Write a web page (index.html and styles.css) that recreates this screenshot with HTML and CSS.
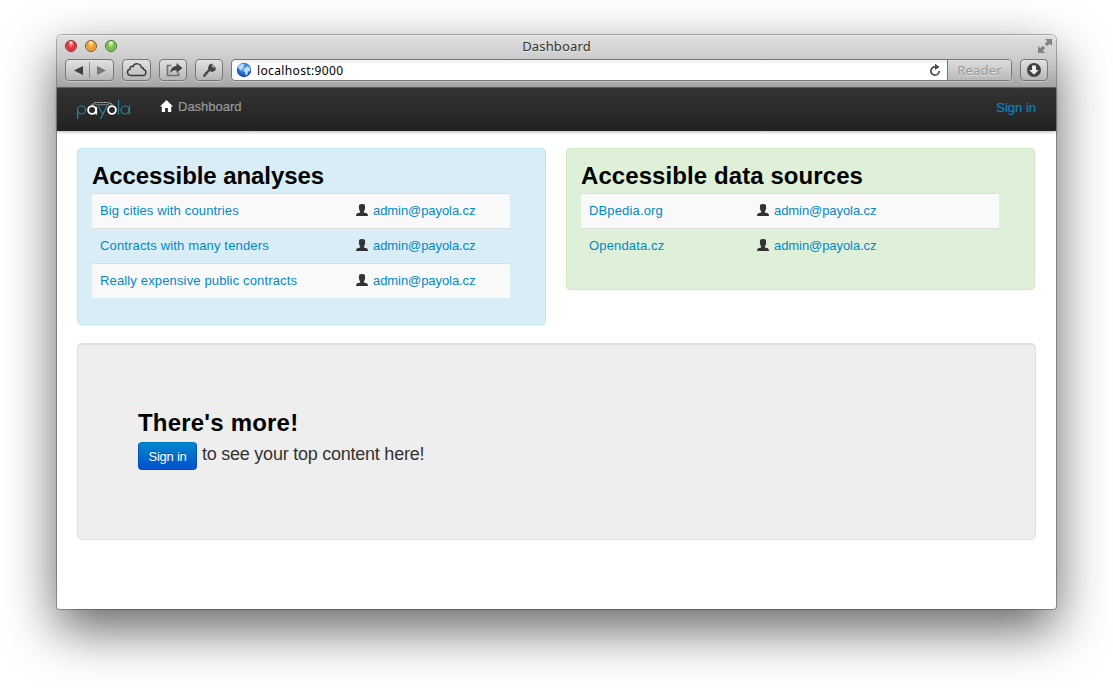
FILE: index.html
```html
<!DOCTYPE html>
<html lang="en">
<head>
<meta charset="utf-8">
<title>Dashboard</title>
<link rel="stylesheet" href="styles.css">
</head>
<body>
<svg class="defs" width="0" height="0" aria-hidden="true">
  <symbol id="user" viewBox="0 0 12 12"><path d="M3 1.200Q3.400 0 6 0Q8.600 0 9 1.200V3.500Q9.500 4 8.900 4.900Q8.700 6.500 7.900 7.200V8.400L10.800 9.300Q12 9.800 12 12H0Q0 9.800 1.200 9.300L4.100 8.400V7.200Q3.300 6.500 3.100 4.900Q2.500 4 3 3.500Z"/></symbol>
</svg>
<div class="window">
  <header class="chrome">
    <div class="titlebar">
      <div class="lights"><i class="light red"></i><i class="light amber"></i><i class="light green"></i></div>
      <span class="window-title">Dashboard</span>
      <svg class="expand" width="14" height="14" viewBox="0 0 14 14"><path d="M7 0h7v7l-2.300-2.300-2.600 2.600-2.400-2.400 2.600-2.600z M0 7l2.300 2.300 2.600-2.600 2.400 2.400-2.600 2.600L7 14H0z" fill="#828282"/></svg>
    </div>
    <div class="toolbar">
      <div class="tool history">
        <svg width="47" height="20" viewBox="0 0 47 20"><path d="M8 10.500L17 6v9z" fill="#3e3e3e"/><path d="M40 10.500L31 6v9z" fill="#777"/><path d="M23.500 2v16" stroke="#8b8b8b"/></svg>
      </div>
      <div class="tool cloud">
        <svg width="27" height="20" viewBox="0 0 27 20"><path d="M8 15.500C3.500 15.500 3.500 9.700 7 9.300C6.500 6.500 8.800 5.800 10 6.700C11.300 2.500 18 3 18.300 7.500C20 7.300 20.700 8.300 20.500 9.500C24 10 23.500 15.500 20 15.500Z" fill="none" stroke="#383838" stroke-width="1.400"/></svg>
      </div>
      <div class="tool share">
        <svg width="26" height="20" viewBox="0 0 26 20"><path d="M11.500 5.500H7.500V15.500H18.500V12.500" fill="none" stroke="#707070" stroke-width="1.700"/><path d="M16.500 3l6 5-6 5V10.200C13.500 10 11.500 11 10 13.500C10.500 9 12.500 6.300 16.500 6z" fill="#444"/></svg>
      </div>
      <div class="tool key">
        <svg width="26" height="20" viewBox="0 0 26 20"><path d="M15.500 3.500L20 8l-1 2.700-3.200 1.300-1.800-1-4.200 4.200-.3 1.500-1.600.3-.9-1.800 5.300-6-.3-1.700 1.400-3z" fill="#434343"/><path d="M9.500 12.500l2 1.500" stroke="#434343"/><path d="M15.700 5.300l2.600 2.600" stroke="#bbb" stroke-width="1.100"/></svg>
      </div>
      <div class="address">
        <svg class="globe" width="16" height="16" viewBox="0 0 16 16"><defs><radialGradient id="sea" cx=".5" cy=".35" r=".65"><stop offset="0" stop-color="#58a9f0"/><stop offset=".6" stop-color="#2874d2"/><stop offset="1" stop-color="#133f94"/></radialGradient></defs><circle cx="8" cy="8" r="7.200" fill="url(#sea)"/><path d="M2 5Q3.500 2 7 1.500L8.500 3 7 4.500 7.500 6 5.500 7.500 6 9 4 8zM9 6l3-2 2.500 3-.5 2-2 .5-.5 3-2 1L9 10 7 8.500z" fill="#d3ebfc" opacity=".85"/></svg>
        <span class="url">localhost:9000</span>
        <svg class="reload" width="12" height="14" viewBox="0 0 12 14"><path d="M10.200 8a4.200 4.200 0 1 1-4.200-4.200h1.500" fill="none" stroke="#4a4a4a" stroke-width="1.700"/><path d="M6 .8l4.600 3.200-4.600 3z" fill="#4a4a4a"/></svg>
        <span class="reader">Reader</span>
      </div>
      <div class="tool downloads">
        <svg width="26" height="20" viewBox="0 0 26 20"><circle cx="13" cy="10" r="7" fill="#424242"/><path d="M11 5.500h4V10h2.700L13 14.800 8.300 10H11z" fill="#eee"/></svg>
      </div>
    </div>
  </header>
  <nav class="navbar">
    <svg class="logo" width="56" height="24" viewBox="0 0 56 24" fill="none">
      <g stroke="#2b819c" stroke-width="1.200"><path d="M1.600 22v-9"/><circle cx="5.500" cy="13" r="4"/><path d="M22.500 9l4 8M31 9l-6.500 13"/><path d="M42.500 3v14.500"/><circle cx="49" cy="13" r="4"/><path d="M53.500 8.500v9"/></g>
      <g stroke="#fff" stroke-width="1.800"><circle cx="16" cy="13" r="3.900"/><path d="M20.200 10v7.500"/><circle cx="36" cy="13" r="3.900"/></g>
      <path d="M16 8.200Q18 5.800 20 5.500H31Q34.500 5.800 37 8.200" stroke="#aaa" stroke-width="1.200" stroke-dasharray="2.500 .6"/><path d="M19 7.800H33" stroke="#888"/>
    </svg>
    <a class="nav-item"><svg width="13" height="12" viewBox="0 0 13 12"><path d="M6.500 0L13 6.400h-1.800V12H7.900V8H5.100v4H1.800V6.400H0z" fill="#fff"/></svg><span>Dashboard</span></a>
    <a class="signin">Sign in</a>
  </nav>
  <main class="content">
    <div class="panels">
      <section class="panel analyses">
        <h2>Accessible analyses</h2>
        <div class="list">
          <div class="row"><a>Big cities with countries</a><a class="owner"><svg><use href="#user"/></svg>admin@payola.cz</a></div>
          <div class="row"><a>Contracts with many tenders</a><a class="owner"><svg><use href="#user"/></svg>admin@payola.cz</a></div>
          <div class="row"><a>Really expensive public contracts</a><a class="owner"><svg><use href="#user"/></svg>admin@payola.cz</a></div>
        </div>
      </section>
      <section class="panel sources">
        <h2>Accessible data sources</h2>
        <div class="list">
          <div class="row"><a>DBpedia.org</a><a class="owner"><svg><use href="#user"/></svg>admin@payola.cz</a></div>
          <div class="row"><a>Opendata.cz</a><a class="owner"><svg><use href="#user"/></svg>admin@payola.cz</a></div>
        </div>
      </section>
    </div>
    <section class="more">
      <h2>There's more!</h2>
      <div class="prompt"><a class="button">Sign in</a><span>to see your top content here!</span></div>
    </section>
  </main>
</div>
</body>
</html>
```

FILE: styles.css
```css
* { box-sizing: border-box; }
body { margin: 0; height: 688px; overflow: hidden; padding: 35px 57px; background: #fff; font: 13px/18px "Liberation Sans", Arial, sans-serif; }
svg { display: block; flex: none; }
.defs { position: absolute; }
.window { width: 999px; height: 574px; background: #fff; border-radius: 5px 5px 3px 3px; box-shadow: 0 0 0 1px rgba(0,0,0,.28), 0 20px 52px rgba(0,0,0,.62); }
.chrome { height: 53px; border-radius: 5px 5px 0 0; background: linear-gradient(#dfdfdf, #cbcbcb 45%, #a5a5a5); border-top: 1px solid #eee; border-bottom: 1px solid #676767; font-family: "Noto Sans", sans-serif; }
.titlebar { height: 22px; display: grid; grid-template-columns: 1fr auto 1fr; align-items: center; padding: 0 4px 2px 8px; }
.lights { display: flex; gap: 8px; }
.light { width: 12px; height: 12px; border-radius: 50%; border: 1px solid; }
.red { background: radial-gradient(ellipse at 50% 15%, #fff 0, #f77 22%, #d92834 55%, #f99 100%); border-color: #82292c; }
.amber { background: radial-gradient(ellipse at 50% 15%, #fff 0, #fbc65b 22%, #e6952a 55%, #ffe388 100%); border-color: #855423; }
.green { background: radial-gradient(ellipse at 50% 15%, #fff 0, #b4e47f 22%, #70b64b 55%, #c9f59b 100%); border-color: #43712f; }
.window-title { margin-right: 4px; font-size: 13px; color: #333; letter-spacing: .15px; text-shadow: 0 1px #e8e8e8; }
.expand { justify-self: end; }
.toolbar { display: flex; padding: 1px 8px 0; }
.tool { height: 22px; border: 1px solid #767676; border-radius: 4px; background: linear-gradient(#e2e2e2, #b6b6b6); box-shadow: 0 1px #c8c8c8; }
.history { width: 49px; margin-right: 8px; }
.cloud { width: 29px; margin-right: 8px; }
.share { width: 28px; margin-right: 8px; }
.key { width: 28px; margin-right: 8px; }
.address { flex: 1; height: 22px; display: flex; align-items: center; border: 1px solid #777; border-radius: 4px; background: linear-gradient(#eee, #fff 4px); padding-left: 4px; box-shadow: 0 1px #c8c8c8; overflow: hidden; }
.url { flex: 1; margin: 1px 0 0 5px; font-size: 12px; letter-spacing: .36px; color: #000; }
.reload { margin-right: 6px; }
.reader { width: 64px; height: 20px; border-left: 1px solid #777; background: linear-gradient(#ddd, #bababa); color: #999; font-size: 13px; letter-spacing: .2px; line-height: 20px; text-align: center; text-shadow: 0 1px #e4e4e4; }
.downloads { width: 28px; margin-left: 8px; }
.navbar { height: 43px; background: linear-gradient(#333, #222); display: flex; align-items: flex-start; padding: 0 20px 0 19px; box-shadow: 0 1px 3px rgba(0,0,0,.3); }
.logo { margin-top: 9px; }
.nav-item { display: flex; margin: 10px 0 0 28px; color: #999; -webkit-text-stroke: .2px; }
.nav-item svg { margin: 2px 5px 0 0; }
.signin { margin: 11px 0 0 auto; color: #0088cc; -webkit-text-stroke: .2px; }
.content { padding: 17px 20px; }
.panels { display: flex; align-items: flex-start; gap: 20px; height: 195px; }
.panel { width: 469px; border: 1px solid; border-radius: 4px; padding: 9px 14px 26px; }
h2 { margin: 0; font-size: 24px; line-height: 35px; color: #000; }
.analyses { background: #d9edf7; border-color: #bce8f1; }
.analyses h2 { letter-spacing: -.08px; }
.sources { background: #dff0d8; border-color: #d0e9c0; }
.sources h2 { letter-spacing: .08px; }
.list { width: 418px; }
.row { display: flex; height: 35px; padding: 8px; border-top: 1px solid #ddd; color: #0088cc; letter-spacing: .15px; }
.row:nth-child(odd) { background: #f9f9f9; }
.analyses .row > a:first-child { width: 256px; }
.sources .row > a:first-child { width: 168px; }
.row .owner { display: flex; letter-spacing: -.07px; }
.owner svg { width: 12px; height: 12px; fill: #333; margin: 2px 5px 0 0; }
.more { height: 197px; border: 1px solid #e0e0e0; border-top-width: 2px; border-radius: 5px; background: #eee; padding: 60px; }
.more h2 { letter-spacing: .2px; }
.prompt { display: flex; margin-top: 2px; color: #333; font-size: 18px; line-height: 24px; letter-spacing: -.24px; }
.button { width: 59px; height: 28px; margin-right: 5px; border: 1px solid #0050bd; border-top-color: #0075c4; border-radius: 4px; background: linear-gradient(#0088cc, #0050cc); color: #fff; font-size: 13px; line-height: 27px; text-align: center; text-shadow: 0 -1px rgba(0,0,0,.25); }
```
